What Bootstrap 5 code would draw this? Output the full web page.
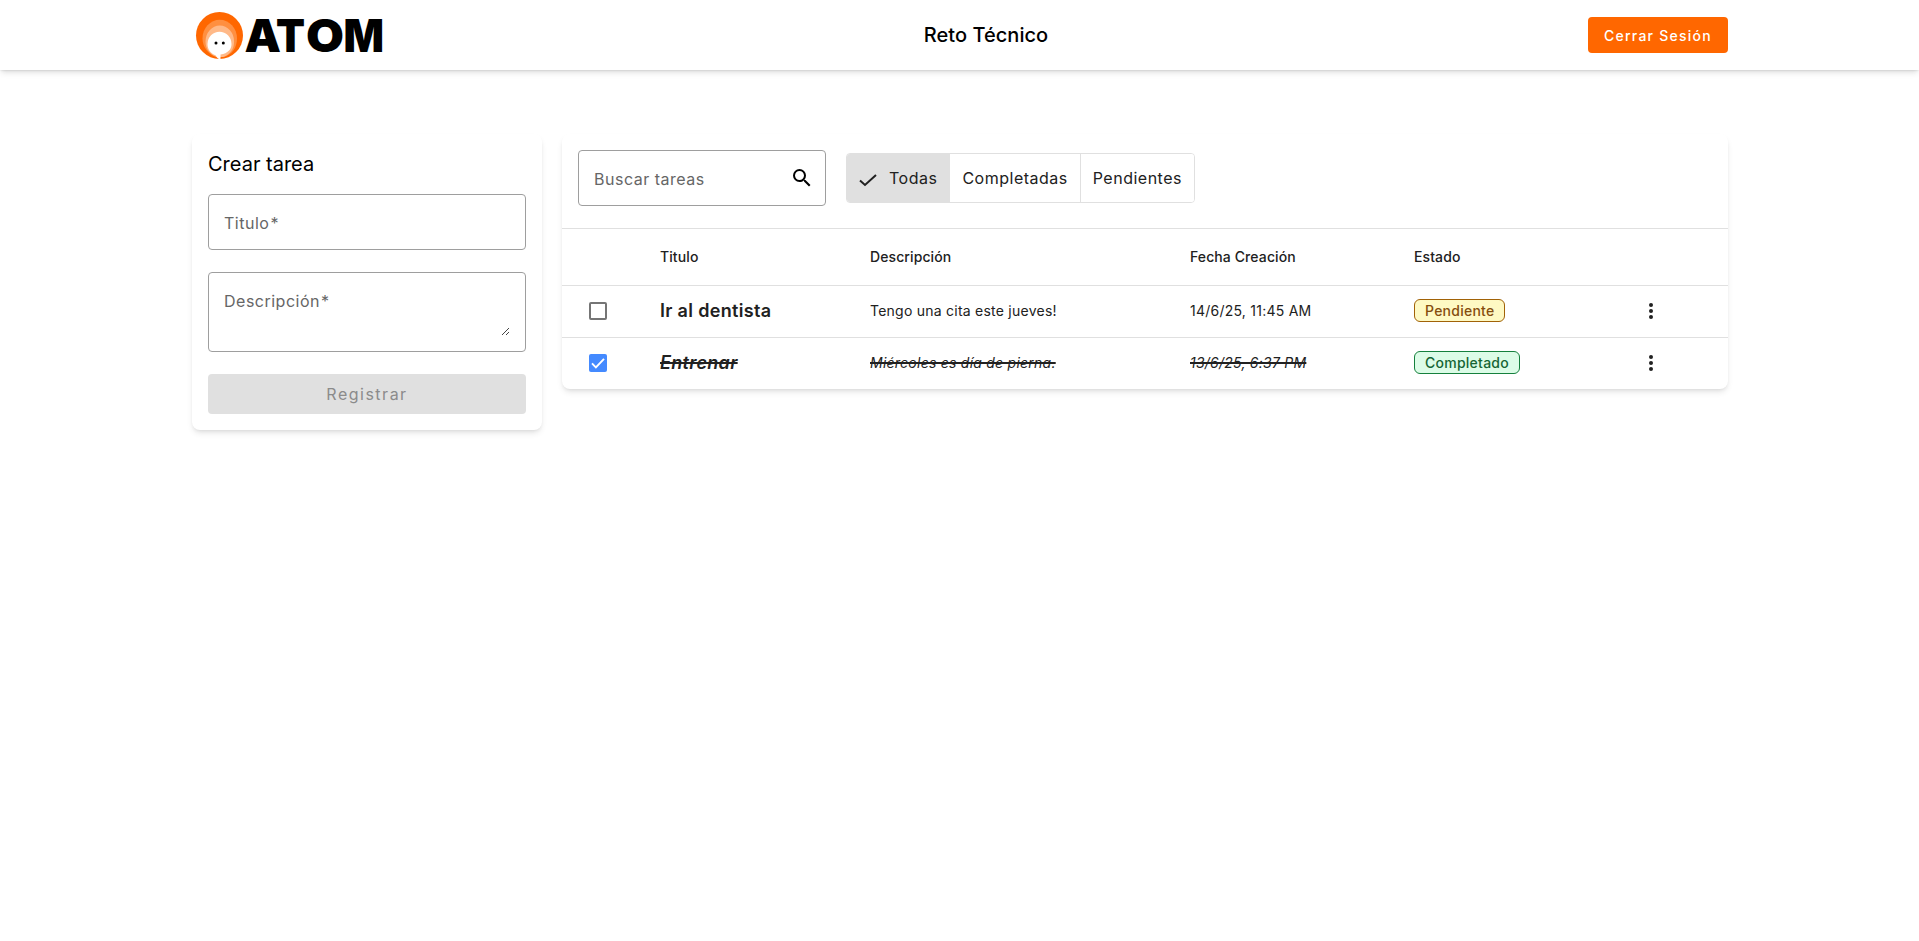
<!DOCTYPE html>
<html lang="es">
<head>
<meta charset="utf-8">
<meta name="viewport" content="width=device-width, initial-scale=1">
<title>Reto Técnico</title>
<link href="https://cdn.jsdelivr.net/npm/bootstrap@5.3.0/dist/css/bootstrap.min.css" rel="stylesheet">
<style>
  body { font-family: Inter, sans-serif; color: #000; background: #fff; letter-spacing: 0; }
  .wrap { width: 1536px; margin-left: 192px; }
  .topbar { height: 70px; box-shadow: 0 4px 6px -1px rgba(0,0,0,.1), 0 2px 4px -2px rgba(0,0,0,.1), 0 0 2px rgba(0,0,0,.12); }
  .brand-logo { width: 192px; height: 70px; overflow: visible; }
  .brand-logo text { font: 900 45px Inter, sans-serif; }
  .app-title { font-size: 20px; font-weight: 500; line-height: 28px; letter-spacing: .04px; }
  .btn-logout, .btn-logout:hover { width: 140px; height: 36px; background: #ff6700; color: #fff; font-size: 14px; font-weight: 500; letter-spacing: 1.25px; border-radius: 4px; padding: 0; border: 0; }
  .content-row { padding-top: 64px; gap: 20px; min-height: calc(100vh - 70px); }
  .panel { background: #fff; border: 0; border-radius: 8px; box-shadow: 0 4px 6px -1px rgba(0,0,0,.1), 0 2px 4px -2px rgba(0,0,0,.1); }
  .panel-form { width: 350px; height: 296px; padding: 16px; }
  .form-title { font-size: 20px; font-weight: 400; line-height: 28px; margin: 0 0 16px; }
  .field { border: 1px solid #9e9e9e; border-radius: 4px; font-size: 16px; line-height: 24px; letter-spacing: .5px; color: #666; padding: 16px 15px 14px; background: #fff; }
  .field .req { margin-left: 1px; }
  .field-line { height: 56px; }
  .field-area, .btn-register { margin-top: 22px; }
  .field-area { height: 80px; position: relative; }
  .grip { position: absolute; right: 15px; bottom: 15px; }
  .btn-register { height: 40px; background: #e0e0e0; color: #8b8b8b; font-size: 16px; letter-spacing: 1.5px; border-radius: 4px; border: 0; padding: 0; }
  .btn-register:disabled { background: #e0e0e0; color: #8b8b8b; opacity: 1; }
  .panel-list { width: 1166px; }
  .tools { height: 94px; padding: 16px 16px 0; gap: 20px; }
  .search { width: 248px; padding-right: 11px; }
  .search svg { margin-top: -1px; }
  .filters { height: 50px; margin-top: 3px; border: 1px solid #e0e0e0; border-radius: 4px; overflow: hidden; font-size: 16px; letter-spacing: .5px; color: #212121; }
  .filters button { border: 0; background: #fff; color: inherit; letter-spacing: inherit; padding: 0 12px; line-height: 48px; }
  .filters button + button { border-left: 1px solid #e0e0e0; }
  .filters button.active { background: #e0e0e0; }
  .filters svg { margin: 4px 12px 0 0; }
  .tasks { table-layout: fixed; margin: 0; width: 1166px; border-collapse: separate; border-spacing: 0; font-size: 14px; letter-spacing: .24px; color: #212121; }
  .tasks th, .tasks td { border-top: 1px solid #e0e0e0; padding: 0 0 2px 16px; vertical-align: middle; }
  .tasks th { height: 57px; font-weight: 500; letter-spacing: .1px; }
  .tasks td { height: 52px; }
  .tasks .task-name { font-size: 18px; font-weight: 600; letter-spacing: .32px; }
  .tasks .menu-cell { padding-left: 17px; }
  .done { font-style: italic; text-decoration: line-through; }
  .tasks td.done { text-decoration-thickness: 2px; }
  .check-box { width: 18px; height: 18px; margin-left: 11px; }
  .state { display: inline-block; font-size: 14px; font-weight: 500; line-height: 21px; letter-spacing: .25px; border: 1px solid; border-radius: 6px; padding: 0 10px; vertical-align: middle; }
  .state-pending { background: #fef9c3; color: #854d0e; border-color: #a16207; }
  .state-done { background: #dcfce7; color: #166534; border-color: #15803d; }
  svg { display: block; }
</style>
</head>
<body>
<header class="topbar bg-white">
  <div class="wrap h-100 d-flex justify-content-between align-items-center">
    <svg class="brand-logo" viewBox="0 0 192 70" role="img" aria-label="ATOM">
      <circle cx="27.500" cy="35.500" r="23.500" fill="#ff6700"/>
      <path d="M10.500 38.500a17 18.500 0 0 1 34.500 0c0 9-5 16-13 18.500h-8c-8-3-13.500-10-13.500-18.500z" fill="#ff8f40"/>
      <path d="M13.500 41.500a14.300 16 0 0 1 28.600 0c0 8-4 13-11 15.500h-6c-7-2.500-11.600-7.500-11.600-15.500z" fill="#ffb988"/>
      <path d="M15.500 44a12 12.300 0 0 1 24 0c0 5.500-3.500 9.300-11 10.600v4.400c-3.300 0-3.700-2-5-3.800c-5-1.700-8-6-8-11.200z" fill="#fff"/>
      <circle cx="24" cy="43" r="1.500"/><circle cx="31.300" cy="43" r="1.500"/>
      <text x="52.500" y="51.700" textLength="36.500" lengthAdjust="spacingAndGlyphs">A</text>
      <text x="84" y="51.700" textLength="29" lengthAdjust="spacingAndGlyphs">T</text>
      <text x="114" y="51.700" textLength="38" lengthAdjust="spacingAndGlyphs">O</text>
      <text x="151.500" y="51.700" textLength="40.500" lengthAdjust="spacingAndGlyphs">M</text>
    </svg>
    <div class="app-title">Reto Técnico</div>
    <button class="btn btn-logout">Cerrar Sesión</button>
  </div>
</header>

<main class="wrap d-flex align-items-start content-row">
  <section class="card panel panel-form">
    <h2 class="form-title">Crear tarea</h2>
    <div class="field field-line">Titulo<span class="req">*</span></div>
    <div class="field field-area">Descripción<span class="req">*</span>
      <svg class="grip" width="9" height="9" viewBox="0 0 9 9" stroke="#444" fill="none"><path d="M1 8 8 1M5 8 8 5"/></svg>
    </div>
    <button class="btn btn-register w-100" disabled>Registrar</button>
  </section>

  <section class="card panel panel-list">
    <div class="tools d-flex align-items-start">
      <div class="field field-line search d-flex justify-content-between">
        <span>Buscar tareas</span>
        <svg width="24" height="24" viewBox="0 0 24 24" fill="#000"><path d="M15.500 14h-.79l-.28-.27A6.471 6.471 0 0 0 16 9.500 6.500 6.500 0 1 0 9.500 16c1.610 0 3.090-.59 4.230-1.570l.27.28v.79l5 4.990L20.490 19l-4.990-5zm-6 0C7.010 14 5 11.990 5 9.500S7.010 5 9.500 5 14 7.010 14 9.500 11.990 14 9.500 14z"/></svg>
      </div>
      <div class="filters d-flex">
        <button class="active d-flex align-items-center"><svg width="18" height="18" viewBox="0 0 18 18"><path d="M1 9.500 6 14 17 4" fill="none" stroke="#212121" stroke-width="2"/></svg>Todas</button>
        <button>Completadas</button>
        <button>Pendientes</button>
      </div>
    </div>
    <table class="tasks">
      <colgroup><col style="width:82px"><col style="width:210px"><col style="width:320px"><col style="width:224px"><col style="width:224px"><col></colgroup>
      <thead><tr><th></th><th>Titulo</th><th>Descripción</th><th>Fecha Creación</th><th>Estado</th><th></th></tr></thead>
      <tbody>
        <tr>
          <td><svg class="check-box" viewBox="0 0 18 18"><rect x="1" y="1" width="16" height="16" rx="1" fill="none" stroke="#757575" stroke-width="2"/></svg></td>
          <td class="task-name">Ir al dentista</td>
          <td>Tengo una cita este jueves!</td>
          <td>14/6/25, 11:45 AM</td>
          <td><span class="state state-pending">Pendiente</span></td>
          <td class="menu-cell"><svg width="24" height="24" viewBox="0 0 24 24" fill="#212121"><circle cx="12" cy="6" r="2"/><circle cx="12" cy="12" r="2"/><circle cx="12" cy="18" r="2"/></svg></td>
        </tr>
        <tr>
          <td><svg class="check-box" viewBox="0 0 18 18"><rect width="18" height="18" rx="2" fill="#448aff"/><path d="M3 9.300 6.900 13.300 15 4.800" fill="none" stroke="#fff" stroke-width="1.900"/></svg></td>
          <td class="task-name done">Entrenar</td>
          <td class="done">Miércoles es día de pierna.</td>
          <td class="done">13/6/25, 6:37 PM</td>
          <td><span class="state state-done">Completado</span></td>
          <td class="menu-cell"><svg width="24" height="24" viewBox="0 0 24 24" fill="#212121"><circle cx="12" cy="6" r="2"/><circle cx="12" cy="12" r="2"/><circle cx="12" cy="18" r="2"/></svg></td>
        </tr>
      </tbody>
    </table>
  </section>
</main>
<script src="https://cdn.jsdelivr.net/npm/bootstrap@5.3.0/dist/js/bootstrap.bundle.min.js"></script>
</body>
</html>
